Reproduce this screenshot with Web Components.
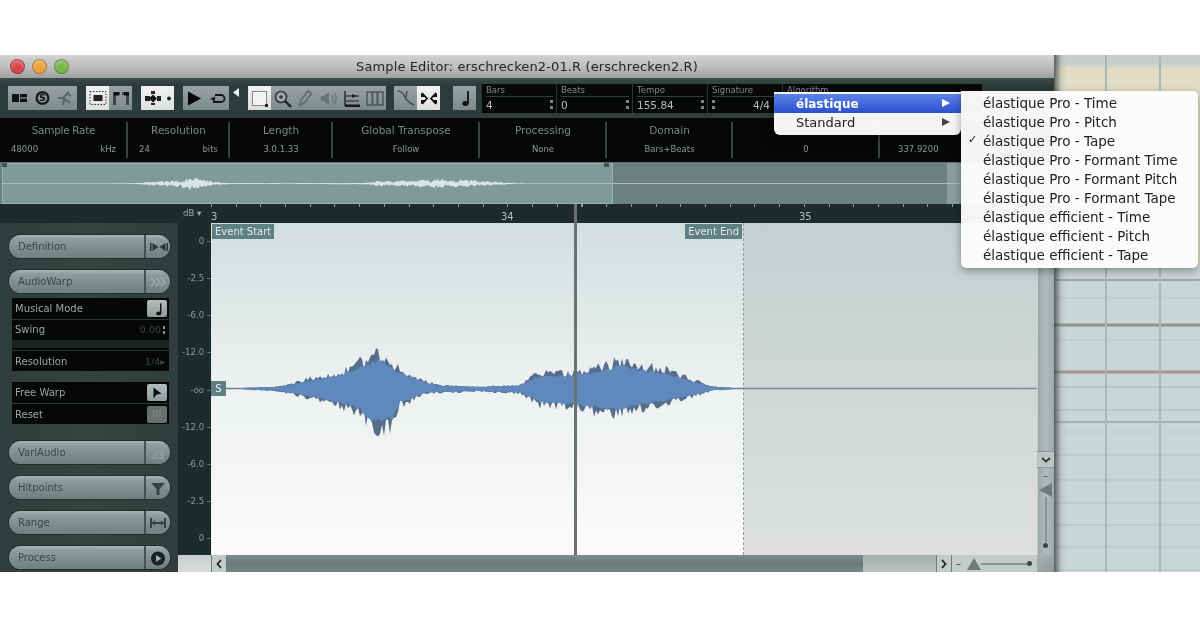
<!DOCTYPE html>
<html>
<head>
<meta charset="utf-8">
<title>Sample Editor</title>
<style>
  html, body { margin: 0; background: #fff; }
</style>
</head>
<body>
<sample-stage>
  <editor-window>
    <title-bar>Sample Editor: erschrecken2-01.R (erschrecken2.R)</title-bar>
    <tool-bar>
      <tool-group><tool-btn icon="layout"></tool-btn><tool-btn icon="solo"></tool-btn><tool-btn icon="snip"></tool-btn></tool-group>
      <tool-group><tool-btn icon="frame" on></tool-btn><tool-btn icon="corners"></tool-btn></tool-group>
      <tool-group><tool-btn icon="cross" on></tool-btn><tool-btn icon="dot" on w="10"></tool-btn></tool-group>
      <tool-group><tool-btn icon="play"></tool-btn><tool-btn icon="loop"></tool-btn></tool-group>
      <tool-btn icon="back" w="8" style="margin:-10px -1px 0 -6px"></tool-btn>
      <tool-group><tool-btn icon="select" on></tool-btn><tool-btn icon="zoom"></tool-btn><tool-btn icon="pencil"></tool-btn><tool-btn icon="speaker"></tool-btn><tool-btn icon="levels"></tool-btn><tool-btn icon="columns"></tool-btn></tool-group>
      <tool-group style="margin-left:-1px"><tool-btn icon="curve"></tool-btn><tool-btn icon="inward" on></tool-btn></tool-group>
      <tool-group style="margin-left:4px"><tool-btn icon="note"></tool-btn></tool-group>
      <transport-bar style="margin-left:-4px">
        <transport-field label="Bars" w="75" spin>4</transport-field>
        <transport-field label="Beats" w="76" spin>0</transport-field>
        <transport-field label="Tempo" w="75" spin>155.84</transport-field>
        <transport-field label="Signature" w="75" lspin right>4/4</transport-field>
        <transport-field label="Algorithm" w="200"></transport-field>
      </transport-bar>
    </tool-bar>
    <info-bar>
      <info-cell label="Sample Rate" left="48000" right="kHz" style="letter-spacing:-.3px"></info-cell>
      <info-cell label="Resolution" left="24" right="bits"></info-cell>
      <info-cell label="Length" value="3.0.1.33"></info-cell>
      <info-cell label="Global Transpose" value="Follow"></info-cell>
      <info-cell label="Processing" value="None"></info-cell>
      <info-cell label="Domain" value="Bars+Beats"></info-cell>
      <info-cell label="&nbsp;" value="0"></info-cell>
      <info-cell label="&nbsp;" value="337.9200" last></info-cell>
    </info-bar>
    <over-view></over-view>
    <editor-body>
      <time-ruler slot="ruler"></time-ruler>
      <side-panel slot="side">
        <side-button icon="arrows">Definition</side-button>
        <side-button icon="chevrons" faded style="margin-bottom:-7px">AudioWarp</side-button>
        <warp-panel>
          <warp-row icon="note">Musical Mode</warp-row>
          <warp-row value="0.00" spin tall>Swing</warp-row>
          <warp-row value="1/4" caret style="height:20px">Resolution</warp-row>
        </warp-panel>
        <warp-panel style="margin:-1px 1px 5px 3px">
          <warp-row icon="flag">Free Warp</warp-row>
          <warp-row icon="bars" dim style="height:20px">Reset</warp-row>
        </warp-panel>
        <side-button icon="pitch" faded>VariAudio</side-button>
        <side-button icon="funnel">Hitpoints</side-button>
        <side-button icon="span">Range</side-button>
        <side-button icon="disc">Process</side-button>
      </side-panel>
      <db-scale slot="scale"></db-scale>
      <wave-view slot="wave"></wave-view>
      <v-scroll slot="vscroll"></v-scroll>
      <h-scroll slot="hscroll"></h-scroll>
    </editor-body>
  </editor-window>
  <back-drop></back-drop>
  <pop-menu style="left:774px;top:37px;width:187px;height:43px;padding:2px 0;border-radius:0 0 6px 6px">
    <menu-item active arrow>élastique</menu-item>
    <menu-item arrow>Standard</menu-item>
  </pop-menu>
  <pop-menu sub style="left:961px;top:36px;width:237px;height:177px;padding:2.5px 0;border-radius:0 5px 6px 6px">
    <menu-item>élastique Pro - Time</menu-item>
    <menu-item>élastique Pro - Pitch</menu-item>
    <menu-item checked>élastique Pro - Tape</menu-item>
    <menu-item>élastique Pro - Formant Time</menu-item>
    <menu-item>élastique Pro - Formant Pitch</menu-item>
    <menu-item>élastique Pro - Formant Tape</menu-item>
    <menu-item>élastique efficient - Time</menu-item>
    <menu-item>élastique efficient - Pitch</menu-item>
    <menu-item>élastique efficient - Tape</menu-item>
  </pop-menu>
</sample-stage>

<script>
const FONT = `"DejaVu Sans", "Liberation Sans", sans-serif`;

// small base class: each element gives its markup and styles to the shadow root
class Part extends HTMLElement {
  connectedCallback() {
    if (this.shadowRoot) return;
    this.attachShadow({ mode: "open" });
    this.shadowRoot.innerHTML = `<style>${this.css()}</style>${this.html()}`;
    this.ready();
  }
  css() { return ""; }
  html() { return "<slot></slot>"; }
  ready() {}
  attr(name, fallback = "") {
    return this.hasAttribute(name) ? this.getAttribute(name) : fallback;
  }
}

const ICONS = {
  layout: `<rect x="3" y="6" width="7" height="8" fill="#111"/><rect x="11" y="6" width="7" height="3.4" fill="#111"/><rect x="11" y="10.6" width="7" height="3.4" fill="#111"/>`,
  solo: `<circle cx="10.500" cy="10" r="7" fill="#1b1b1b"/><circle cx="10.500" cy="10" r="4.600" fill="#8d9a9a"/><text x="10.500" y="13.400" font-size="9.500" font-weight="bold" text-anchor="middle" fill="#111">S</text>`,
  snip: `<path d="M3 10h5M8 10l6-6M8 10l7 5M11 5l5 3M9 12l-1 5" stroke="#5a6767" stroke-width="2.200" fill="none"/>`,
  frame: `<rect x="3" y="3.500" width="16" height="13" fill="none" stroke="#333" stroke-dasharray="1.500 1.500"/><rect x="6.500" y="7" width="9" height="6" fill="#222"/>`,
  corners: `<path d="M3 17V4h7v3H6v10zM12 4h7v13h-3V7h-4z" fill="#3c4646"/><rect x="4" y="4" width="5" height="3.500" fill="#0e0e0e"/><rect x="14" y="4" width="5" height="3.500" fill="#0e0e0e"/>`,
  cross: `<path d="M3 8h5v5H3zM15 8h4v5h-4zM9 3h4v3H9zM9 15h4v2H9z" fill="#222"/><path d="M15 10.500l-4-4-4 4 4 4z" fill="#111"/>`,
  dot: `<circle cx="5" cy="10.500" r="2" fill="#222"/>`,
  play: `<path d="M4 3.500l13 7-13 7z" fill="#070707"/>`,
  loop: `<path d="M8 7h6a3.500 3.500 0 0 1 0 7H6" fill="none" stroke="#151515" stroke-width="1.800"/><path d="M8 3.500v7L3 7z" transform="translate(0 7) translate(0 -1) scale(1 .7)" fill="#151515"/>`,
  back: `<path d="M7 5v9L1 9.500z" fill="#eef2f2"/>`,
  select: `<rect x="3.500" y="3.500" width="14" height="14" fill="#f4f4f4" stroke="#8a8a8a"/><rect x="16" y="16" width="3" height="3" fill="#222"/>`,
  zoom: `<circle cx="9" cy="9" r="5.500" fill="#a0acac" stroke="#2d3636" stroke-width="1.600"/><path d="M13 13l6 6" stroke="#1a2020" stroke-width="2.400"/><path d="M7 9h4M9 7v4" stroke="#2d3636" stroke-width="1.400"/>`,
  pencil: `<path d="M5 17l1-5 7-9 3.500 2.500-7 9z" fill="none" stroke="#636f6f" stroke-width="1.800"/>`,
  speaker: `<path d="M3 8h3l5-4v13l-5-4H3z" fill="#687474"/><path d="M13.500 7a5 5 0 0 1 0 7M16 5a8 8 0 0 1 0 11" fill="none" stroke="#687474" stroke-width="1.400"/>`,
  levels: `<path d="M4 3v15" stroke="#222" stroke-width="1.400"/><path d="M4 8h14M4 13h14" stroke="#3b4545" stroke-width="1.500"/><path d="M4 16.500h15v2.500H4z" fill="#161616"/><path d="M11 6l5 2-5 2z" fill="#222"/>`,
  columns: `<rect x="3" y="4" width="16" height="13" fill="none" stroke="#4d5858" stroke-width="1.500"/><path d="M8.500 4v13M13.500 4v13" stroke="#4d5858" stroke-width="2"/>`,
  curve: `<path d="M3 3c7 1 6 6 8 8s3 4 8 6M12 3l-1 7" fill="none" stroke="#475252" stroke-width="1.600"/>`,
  inward: `<path d="M3 5l5 4-5 0zM19 5l-5 4 5 0zM3 16l5-4-5 0zM19 16l-5-4 5 0z" fill="#101010"/><path d="M4 5l5 5.500-5 5.500M18 5l-5 5.500 5 5.500" fill="none" stroke="#101010" stroke-width="1.800"/>`,
  note: `<path d="M14 3v12" stroke="#111" stroke-width="1.800"/><ellipse cx="11.500" cy="15.500" rx="3.200" ry="2.400" fill="#111"/>`,
  arrows: `<path d="M2 5h1.500v8H2zM10.500 9l-6-4v8zM11.500 9l6-4v8zM18.500 5H20v8h-1.500z" fill="#2c3535"/>`,
  chevrons: `<path d="M3 5l4 4-4 4M8 5l4 4-4 4M13 5l4 4-4 4" fill="none" stroke="#9fb0b0" stroke-width="1.400"/>`,
  pitch: `<path d="M4 14l9-9v9zM14 4h1v11h-1z" fill="none" stroke="#8c9c9c" stroke-width="1.300"/>`,
  funnel: `<path d="M3 4h14l-5.500 6v6h-3v-6z" fill="#39413f"/>`,
  span: `<path d="M3 4v10M17 4v10M3 9h14" stroke="#39413f" stroke-width="2"/><path d="M4 9l3-3v6zM16 9l-3-3v6z" fill="#39413f"/>`,
  disc: `<circle cx="10" cy="9.500" r="7" fill="#1c2222"/><path d="M8 6l5.500 3.500L8 13z" fill="#a7b3b3"/>`,
  flag: `<path d="M5 3l10 8 -6 1 -4 5z" fill="#0c0c0c"/>`,
  bars: `<path d="M4 5h2v9H4zM8 5h2v9H8zM12 5h2v9h-2z" fill="#778585"/>`,
};

class SampleStage extends Part {
  css() { return `
    :host { display: block; width: 1200px; height: 628px; position: relative; overflow: hidden; background: #fff; font-family: ${FONT}; }
    .band { display: flex; margin-top: 55px; height: 517px; position: absolute; top: 0; left: 0; right: 0; filter: blur(.5px); }
  `; }
  html() { return `<div class="band"><slot></slot></div>`; }
}

class EditorWindow extends Part {
  css() { return `
    :host { display: flex; flex-direction: column; width: 1054px; height: 517px; flex: none; overflow: hidden; background: #2f3e3d; box-shadow: inset 0 -1px 0 #111; }
  `; }
}

class TitleBar extends Part {
  css() { return `
    :host { display: flex; align-items: center; justify-content: center; height: 23px; flex: none; padding: 0 0 1px 0; box-sizing: border-box;
      background: linear-gradient(#d2d2d2, #bcbcbc 55%, #9f9f9f); color: #262626; font-size: 13px; letter-spacing: .12px; position: relative; }
    .lights { position: absolute; left: 10px; top: 4px; display: flex; gap: 7px; }
    .lights span { width: 15px; height: 15px; border-radius: 50%; box-shadow: inset 0 0 0 1px rgba(0,0,0,.3), inset 0 3px 4px rgba(255,255,255,.35); }
    .r { background: #d9444e; } .y { background: #eaa33a; } .g { background: #76b94a; }
  `; }
  html() { return `<div class="lights"><span class="r"></span><span class="y"></span><span class="g"></span></div><slot></slot>`; }
}

class ToolBar extends Part {
  css() { return `
    :host { display: flex; align-items: center; gap: 9px; height: 40px; flex: none; box-sizing: border-box; padding: 0 0 0 8px;
      background: linear-gradient(#3c4a49, #2c3a39 20%, #2e3c3b); }
  `; }
}

class ToolGroup extends Part {
  css() { return `
    :host { display: flex; height: 24px; flex: none; background: linear-gradient(#98a4a4, #7c8a8a); }
  `; }
}

class ToolBtn extends Part {
  css() {
    const w = this.attr("w", "23");
    return `
    :host { display: flex; align-items: center; justify-content: center; height: 24px; width: ${w}px; flex: none; }
    :host([on]) { background: linear-gradient(#f1f3f3, #dcdfdf); }
    svg { width: 22px; height: 21px; flex: none; }
    :host([w]) svg { width: ${w}px; }
  `; }
  html() {
    const w = this.attr("w", "22");
    return `<svg viewBox="0 0 ${w} 21">${ICONS[this.attr("icon")] || ""}</svg>`;
  }
}

class TransportBar extends Part {
  css() { return `
    :host { display: flex; width: 501px; height: 29px; flex: none; background: #070909; }
  `; }
}

class TransportField extends Part {
  css() { return `
    :host { display: block; box-sizing: border-box; width: ${this.attr("w")}px; flex: none; padding: 1px 3px 0 4px; color: #aab3b3; position: relative; border-left: 1px solid #2c3535; }
    .l { font-size: 8.500px; line-height: 10px; color: #7e8989; border-bottom: 1px solid #333d3d; height: 11px; }
    .v { display: flex; align-items: center; justify-content: space-between; font-size: 10.500px; line-height: 16px; color: #b8bebe; }
    :host([right]) .v { padding-right: 9px; }
    i { display: flex; flex-direction: column; gap: 3px; }
    i b { display: block; width: 3px; height: 3px; background: #7c8686; }
  `; }
  html() {
    const spin = `<i><b></b><b></b></i>`;
    return `<div class="l">${this.attr("label")}</div>
      <div class="v">${this.hasAttribute("lspin") ? spin : ""}<span><slot></slot></span>${this.hasAttribute("spin") ? spin : ""}</div>`;
  }
}

class InfoBar extends Part {
  css() { return `
    :host { display: grid; grid-template-columns: 128px 102px 103px 147px 127px 126px 147px 174px; height: 44px; flex: none; box-sizing: border-box; padding: 4px 0 4px; background: #060808; }
  `; }
}

class InfoCell extends Part {
  css() { return `
    :host { display: flex; flex-direction: column; justify-content: space-between; box-sizing: border-box; padding: 2px 10px 0 11px; height: 36px; border-right: 2px solid #3a4444; color: #758080; text-align: center; }
    :host([last]) { border-right: 0; padding-left: 18px; }
    .l { font-size: 10.500px; line-height: 13px; color: #7b8686; }
    .v { display: flex; justify-content: center; font-size: 8.500px; line-height: 13px; padding-bottom: 2px; color: #8b9595; letter-spacing: 0; }
    .v.split { justify-content: space-between; }
    :host([last]) .v { justify-content: flex-start; }
  `; }
  html() {
    const split = this.hasAttribute("left");
    const inner = split
      ? `<span>${this.attr("left")}</span><span>${this.attr("right")}</span>`
      : `<span>${this.attr("value")}</span>`;
    return `<div class="l">${this.attr("label")}</div><div class="v ${split ? "split" : ""}">${inner}</div>`;
  }
}

// envelope read off the reference: x, amplitude above, amplitude below the zero line
const UPPER = [[240,.5],[280,2],[310,10],[340,17],[367,30],[377,35],[383,35],[393,23],[427,7],[440,3.5],[480,2],[520,3.5],[537,15],[573,17],[607,23],[620,30],[633,25],[663,20],[680,13],[713,2],[737,.5]];
const LOWER = [[240,.5],[280,3],[310,10],[340,18],[360,25],[370,43],[393,37],[400,18],[427,5],[480,3],[520,5],[540,17],[573,20],[613,27],[633,22],[680,12],[713,2],[737,.5]];

function envelope(table, x) {
  for (let i = 1; i < table.length; i++) {
    if (x <= table[i][0]) {
      const [x0, a0] = table[i - 1], [x1, a1] = table[i];
      return a0 + (a1 - a0) * (x - x0) / (x1 - x0);
    }
  }
  return 0;
}

function seeded(seed) {
  return () => (seed = (seed * 16807) % 2147483647) / 2147483647;
}

// outline of the wave as a polygon, in the coordinates given by mapX
function wavePath(seed, gain, spike, mapX, zero) {
  const rnd = seeded(seed), top = [], bottom = [];
  for (let x = 240; x <= 738; x += 2) {
    const j = () => 1 - spike + rnd() * spike * 1.6;
    top.push(`${mapX(x).toFixed(1)} ${(zero - envelope(UPPER, x) * gain * j()).toFixed(1)}`);
    bottom.unshift(`${mapX(x).toFixed(1)} ${(zero + envelope(LOWER, x) * gain * j()).toFixed(1)}`);
  }
  return `M${top.join("L")}L${bottom.join("L")}Z`;
}

class OverView extends Part {
  css() { return `
    :host { display: flex; height: 42px; flex: none; position: relative; background: #6b8080; box-sizing: border-box; border-top: 1px solid #5e7070; }
    .sel { width: 611px; background: #809999; box-shadow: inset 0 0 0 1px #9db0b0; margin-left: 2px; flex: none; position: relative; }
    .sel::before, .sel::after { content: ""; position: absolute; top: 0; width: 5px; height: 4px; background: #44545a; }
    .sel::before { left: 0; } .sel::after { right: 4px; }
    .mid { width: 334px; flex: none; }
    .end { flex: 1; background: #8b9d9d; }
    svg { position: absolute; left: 0; top: 0; width: 1054px; height: 41px; }
  `; }
  html() {
    const map = x => x <= 480 ? 110 + (x - 245) * 0.62 : x <= 520 ? 256 + (x - 480) * 2.72 : 365 + (x - 520) * 0.79;
    return `<div class="sel"></div><div class="mid"></div><div class="end"></div>
      <svg viewBox="0 0 1054 41">
        <path d="M2 20.500H1054" stroke="#a9bcbc" stroke-width="1"/>
        <path d="${wavePath(77, .13, .7, map, 20.5)}" fill="#d9e4e4"/>
      </svg>`;
  }
}

class EditorBody extends Part {
  css() { return `
    :host { display: grid; flex: 1; min-height: 0; grid-template-columns: 178px 33px 826px 17px; grid-template-rows: 19px 332px 17px; background: #1d2c2b; }
    ::slotted([slot=ruler]) { grid-column: 1 / 5; grid-row: 1; }
    ::slotted([slot=side]) { grid-column: 1; grid-row: 2 / 4; }
    ::slotted([slot=scale]) { grid-column: 2; grid-row: 2; }
    ::slotted([slot=wave]) { grid-column: 3; grid-row: 2; }
    ::slotted([slot=vscroll]) { grid-column: 4; grid-row: 2 / 4; }
    ::slotted([slot=hscroll]) { grid-column: 2 / 4; grid-row: 3; }
  `; }
  html() { return `<slot name="ruler"></slot><slot name="side"></slot><slot name="scale"></slot><slot name="wave"></slot><slot name="vscroll"></slot><slot name="hscroll"></slot>`; }
}

class TimeRuler extends Part {
  css() { return `
    :host { display: flex; box-sizing: border-box; height: 19px; padding-left: 183px; background: #1d2c2b; color: #aebcbc; position: relative; font-size: 10px; }
    .db { width: 28px; flex: none; line-height: 19px; font-size: 8.500px; color: #9fadad; }
    .mark { flex: none; padding-top: 6px; line-height: 13px; }
    .ticks { position: absolute; left: 211px; right: 0; top: 0; height: 3px; background: repeating-linear-gradient(90deg, #8fa0a0 0 1px, transparent 1px 24.700px); }
    .head { position: absolute; top: 0; width: 3px; height: 19px; background: #6b7272; left: 574px; }
  `; }
  html() { return `<div class="ticks"></div><div class="db">dB &#9662;</div>
    <div class="mark" style="width:290px">3</div><div class="mark" style="width:298px">34</div><div class="mark">35</div><div class="head"></div>`; }
}

class SidePanel extends Part {
  css() { return `
    :host { display: flex; flex-direction: column; gap: 12px; box-sizing: border-box; padding: 12px 8px 0 9px; background: linear-gradient(90deg, #2f3d3c, #36443f 50%, #2f3d3c); }
  `; }
}

class SideButton extends Part {
  css() { return `
    :host { display: flex; height: 23px; flex: none; border-radius: 12px; background: linear-gradient(#a6b4b3, #8d9c9c 18%, #6e7f7e); box-shadow: 0 0 0 1px #222e2d; color: #3a4747; font-size: 10px; overflow: hidden; }
    .t { flex: 1; display: flex; align-items: center; padding-left: 9px; }
    .i { width: 24px; display: flex; align-items: center; justify-content: center; border-left: 2px solid #46524f; flex: none; }
    svg { width: 20px; height: 18px; }
  `; }
  html() { return `<div class="t"><slot></slot></div><div class="i"><svg viewBox="0 0 20 18">${ICONS[this.attr("icon")] || ""}</svg></div>`; }
}

class WarpPanel extends Part {
  css() { return `
    :host { display: flex; flex-direction: column; gap: 1px; margin: 0 1px 0 3px; flex: none; background: #2a3534; border-radius: 2px; }
  `; }
}

class WarpRow extends Part {
  css() { return `
    :host { display: flex; align-items: center; justify-content: space-between; height: 21px; padding: 0 2px 0 3px; background: #060808; color: #9aa5a5; font-size: 10px; flex: none; position: relative; }
    :host([tall]) { height: 30px; align-items: flex-start; line-height: 20px; box-shadow: inset 0 -2px 0 #060808, inset 0 -10px 0 #1d2222; }
    .v { color: #3f4747; font-size: 9.500px; display: flex; align-items: center; gap: 2px; padding-right: 2px; }
    .i { width: 20px; height: 17px; background: linear-gradient(#b3bcbc, #8f9b9b); display: flex; align-items: center; justify-content: center; border-radius: 2px; }
    :host([dim]) .i { background: #66716f; }
    svg { width: 17px; height: 16px; }
    i { display: flex; flex-direction: column; gap: 2px; }
    i b { display: block; width: 2px; height: 3px; background: #8c9696; }
  `; }
  html() {
    let tail = "";
    if (this.hasAttribute("icon")) tail = `<div class="i"><svg viewBox="0 0 20 20">${ICONS[this.attr("icon")]}</svg></div>`;
    if (this.hasAttribute("value")) tail = `<div class="v">${this.attr("value")}${this.hasAttribute("spin") ? "<i><b></b><b></b></i>" : ""}${this.hasAttribute("caret") ? "&#9656;" : ""}</div>`;
    return `<span><slot></slot></span>${tail}`;
  }
}

class DbScale extends Part {
  css() { return `
    :host { display: flex; flex-direction: column; justify-content: space-between; box-sizing: border-box; padding: 12px 0 11px; background: #1d2c2b; color: #8b9a9a; font-size: 8.500px; line-height: 12px; text-align: right; }
  `; }
  html() { return ["0","-2.5","-6.0","-12.0","-oo","-12.0","-6.0","-2.5","0"].map(v => `<div>${v} &#8211;</div>`).join(""); }
}

class WaveView extends Part {
  css() { return `
    :host { display: flex; position: relative; overflow: hidden; }
    .in { width: 531px; flex: none; border-left: 2px dotted #dfe6e6; margin-left: -1px; background: linear-gradient(#d2dfdf, #e7ecec 38%, #eef1f1 50%, #f2f4f4 70%, #fbfbfb); border-right: 1px dashed #8f9a9a; }
    .out { flex: 1; background: linear-gradient(#c5cfcf, #d1d7d7 50%, #dde0de); }
    svg { position: absolute; left: 0; top: 0; width: 826px; height: 332px; }
    .flag { position: absolute; top: 1px; height: 15px; line-height: 15px; padding: 0 3px; font-size: 10px; background: #5e8080; color: #e1eaea; white-space: nowrap; }
    .s { position: absolute; left: 0; top: 158px; width: 15px; height: 15px; line-height: 15px; text-align: center; font-size: 10px; background: #5e8080; color: #eef; }
    .head { position: absolute; left: 363px; top: 0; bottom: 0; width: 3px; background: #6c7272; }
  `; }
  html() {
    const map = x => x - 211, zero = 165.5;
    return `<div class="in"></div><div class="out"></div>
      <svg viewBox="0 0 826 332">
        <path d="M0 ${zero}H531" stroke="#6d8092" stroke-width="1.400"/>
        <path d="M531 ${zero}H826" stroke="#7f8c94" stroke-width="1.400"/>
        <path d="${wavePath(4242, 1, .36, map, zero)}" fill="#566e8a"/>
        <path d="${wavePath(911, .8, .12, map, zero)}" fill="#5f88bc"/>
      </svg>
      <div class="head"></div>
      <div class="flag" style="left:1px">Event Start</div>
      <div class="flag" style="right:295px">Event End</div>
      <div class="s">S</div>`;
  }
}

class VScroll extends Part {
  css() { return `
    :host { display: flex; flex-direction: column; align-items: center; background: linear-gradient(90deg, #97a3a3, #b3bcbc 50%, #a0a9a9); box-shadow: inset 1px 0 0 #c9d0d0; position: relative; color: #3c4444; }
    .track { height: 228px; flex: none; }
    .btn { width: 100%; height: 17px; flex: none; display: flex; align-items: center; justify-content: center; background: #bcc4c4; border: solid #8b9595; border-width: 1px 0; box-sizing: border-box; }
    .zoom { display: flex; flex-direction: column; align-items: center; flex: 1; padding: 2px 0 7px; }
    .m { font-size: 10px; line-height: 11px; }
    .tri { width: 0; height: 0; border: solid transparent; border-width: 7px 13px 7px 0; border-right-color: #6f7a7a; margin-top: 2px; }
    .line { flex: 1; width: 2px; background: #88928f; }
    .dot { width: 5px; height: 5px; border-radius: 50%; background: #3c4444; margin-top: 1px; }
    .grip { width: 100%; height: 17px; flex: none; background: linear-gradient(135deg, #aab3b3, #8f9a9a); }
  `; }
  html() { return `<div class="track"></div>
    <div class="btn"><svg width="10" height="6" viewBox="0 0 10 6"><path d="M1 1l4 3.500L9 1" fill="none" stroke="#333" stroke-width="1.800"/></svg></div>
    <div class="zoom"><div class="m">&#8211;</div><div class="tri"></div><div class="line"></div><div class="dot"></div></div>
    <div class="grip"></div>`; }
}

class HScroll extends Part {
  css() { return `
    :host { display: flex; align-items: stretch; background: #b4bcbc; color: #333; box-shadow: inset 0 1px 0 #6f7a7a, inset 0 -1px 0 #151a1a; }
    .corner { width: 33px; background: linear-gradient(#c6cccc, #dadddd); flex: none; }
    .arr { width: 16px; flex: none; display: flex; align-items: center; justify-content: center; background: #c3caca; border: solid #6f7a7a; border-width: 0 1px; box-sizing: border-box; }
    .thumb { width: 636px; flex: none; background: linear-gradient(#7e8e8e, #6a7b7b 50%, #768686); }
    .rest { width: 73px; flex: none; background: linear-gradient(#a4adad, #bcc3c3); }
    .zoom { flex: 1; display: flex; align-items: center; padding: 0 5px 0 4px; gap: 0; background: #c4cbcb; }
    .m { font-size: 10px; margin-right: 6px; }
    .tri { width: 0; height: 0; border: solid transparent; border-width: 0 7px 12px; border-bottom-color: #6f7a7a; flex: none; }
    .line { flex: 1; height: 2px; background: #88928f; }
    .dot { width: 5px; height: 5px; border-radius: 50%; background: #3c4444; }
  `; }
  html() { return `<div class="corner"></div>
    <div class="arr"><svg width="6" height="10" viewBox="0 0 6 10"><path d="M5 1L1.500 5 5 9" fill="none" stroke="#222" stroke-width="1.800"/></svg></div>
    <div class="thumb"></div><div class="rest"></div>
    <div class="arr"><svg width="6" height="10" viewBox="0 0 6 10"><path d="M1 1l3.500 4L1 9" fill="none" stroke="#222" stroke-width="1.800"/></svg></div>
    <div class="zoom"><div class="m">&#8211;</div><div class="tri"></div><div class="line"></div><div class="dot"></div></div>`; }
}

class BackDrop extends Part {
  css() { return `
    :host { display: block; flex: 1; position: relative; overflow: hidden; background: linear-gradient(#c4cfce 0, #c4cfce 8px, #e0dcc6 14px, #e0dcc6 210px, #c9d6d8 212px); }
    svg { display: block; width: 146px; height: 517px; }
    .shade { position: absolute; left: 0; top: 0; bottom: 0; width: 12px; background: linear-gradient(90deg, rgba(45,55,55,.75), rgba(120,130,130,.18) 60%, transparent); }
  `; }
  html() {
    // y of the lines is counted from the top of the screenshot
    const rows = [[280,"#9aa6a4",2],[298,"#bccaca",1],[325,"#8f9088",3],[340,"#b9c7c7",1],[372,"#a8948a",3],[387,"#b7c5c5",2],[410,"#b9c8c5",2],[422,"#7e8f86",1],[432,"#bccaca",1],[455,"#b3c1c3",1],[480,"#b3c1c3",1],[503,"#b3c1c3",1],[525,"#b3c1c3",1],[547,"#b3c1c3",1],[570,"#b3c1c3",1]];
    const lines = rows.map(([y, c, w]) => `<path d="M0 ${y - 55}H146" stroke="${c}" stroke-width="${w}"/>`).join("");
    return `<svg viewBox="0 0 146 517"><g>${lines}</g>
      <path d="M52 0V517M106 0V517" stroke="#a9b7b7" stroke-width="2"/></svg><div class="shade"></div>`;
  }
}

class PopMenu extends Part {
  css() { return `
    :host { display: block; position: absolute; box-sizing: border-box; background: rgba(252,252,252,.97); box-shadow: 0 3px 8px rgba(0,0,0,.35); }
  `; }
}

class MenuItem extends Part {
  css() { return `
    :host { display: flex; align-items: center; height: 19px; padding-left: 22px; position: relative; color: #222; font-size: 13.500px; white-space: nowrap; }
    :host([arrow]) { font-size: 13px; }
    :host([active]) { background: linear-gradient(#5c83e6, #2b4fcf); color: #fff; font-weight: bold; font-size: 12px; }
    .c { position: absolute; left: 7px; top: 1px; font-size: 11px; color: #111; }
    .a { position: absolute; right: 11px; top: 5px; width: 0; height: 0; border: solid transparent; border-width: 4.500px 0 4.500px 8px; border-left-color: #444; }
    :host([active]) .a { border-left-color: #fff; }
  `; }
  html() {
    return `${this.hasAttribute("checked") ? `<span class="c">&#10003;</span>` : ""}<slot></slot>${this.hasAttribute("arrow") ? `<span class="a"></span>` : ""}`;
  }
}

customElements.define("sample-stage", SampleStage);
customElements.define("editor-window", EditorWindow);
customElements.define("title-bar", TitleBar);
customElements.define("tool-bar", ToolBar);
customElements.define("tool-group", ToolGroup);
customElements.define("tool-btn", ToolBtn);
customElements.define("transport-bar", TransportBar);
customElements.define("transport-field", TransportField);
customElements.define("info-bar", InfoBar);
customElements.define("info-cell", InfoCell);
customElements.define("over-view", OverView);
customElements.define("editor-body", EditorBody);
customElements.define("time-ruler", TimeRuler);
customElements.define("side-panel", SidePanel);
customElements.define("side-button", SideButton);
customElements.define("warp-panel", WarpPanel);
customElements.define("warp-row", WarpRow);
customElements.define("db-scale", DbScale);
customElements.define("wave-view", WaveView);
customElements.define("v-scroll", VScroll);
customElements.define("h-scroll", HScroll);
customElements.define("back-drop", BackDrop);
customElements.define("pop-menu", PopMenu);
customElements.define("menu-item", MenuItem);
</script>
</body>
</html>
